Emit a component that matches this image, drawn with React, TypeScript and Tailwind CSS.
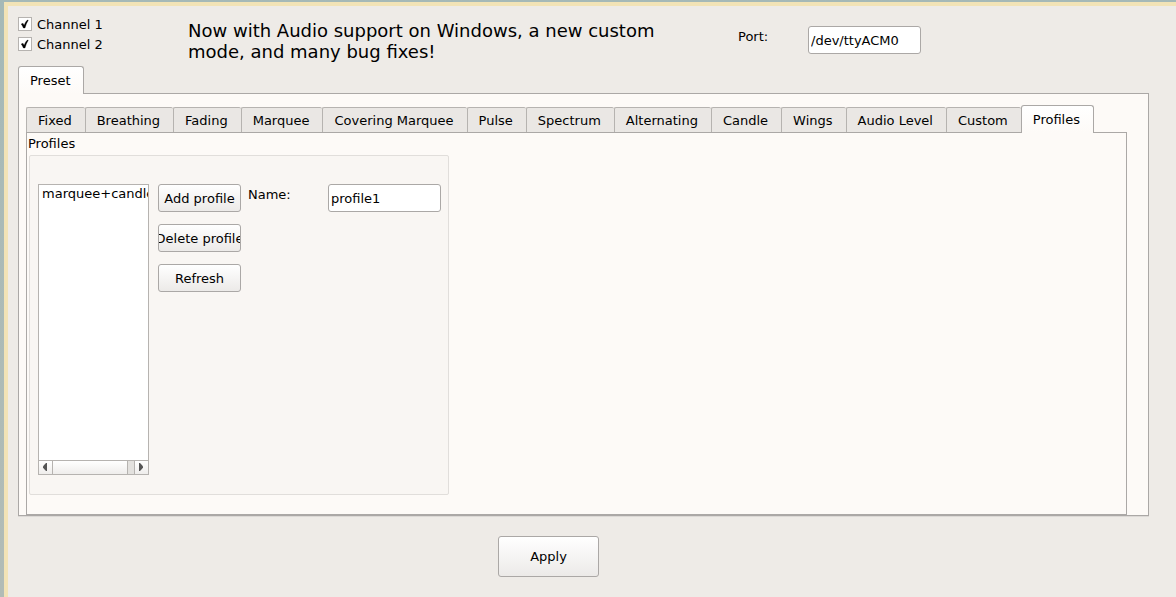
import { useState } from 'react';

const TABS = [
  'Fixed',
  'Breathing',
  'Fading',
  'Marquee',
  'Covering Marquee',
  'Pulse',
  'Spectrum',
  'Alternating',
  'Candle',
  'Wings',
  'Audio Level',
  'Custom',
  'Profiles',
];

const buttonLook =
  'overflow-hidden rounded-[3px] border border-[#aba8a6] bg-linear-to-b from-white to-[#eceae8] whitespace-nowrap';
const fieldLook =
  'h-7 w-[113px] rounded-[3px] border border-[#aba8a6] bg-white px-0.5 pt-px outline-none';

function ChannelCheck({ id, label }: { id: string; label: string }) {
  const [checked, setChecked] = useState(true);
  return (
    <div className="flex h-5 items-center gap-[5px]">
      <span className="grid size-3.5">
        <input
          id={id}
          type="checkbox"
          checked={checked}
          onChange={(e) => setChecked(e.target.checked)}
          className="col-start-1 row-start-1 size-3.5 appearance-none border border-[#b6b3b0] bg-white"
        />
        {checked && (
          <svg viewBox="0 0 14 14" className="pointer-events-none col-start-1 row-start-1 size-3.5">
            <path d="M3.2 7 L5 6.3 L6.1 8.2 Q7.4 4.6 9.4 3 L10.3 3.2 Q8.2 6.4 7 11 L5.4 11 Q4.6 8.8 3.2 7 Z" fill="#000" stroke="#000" strokeWidth="0.3" />
          </svg>
        )}
      </span>
      <label htmlFor={id} className="pt-px">{label}</label>
    </div>
  );
}

function ProfileList() {
  return (
    <div className="flex h-[291px] w-[111px] flex-col border border-[#b6b3b0] bg-white">
      <ul className="flex-1 overflow-hidden pl-[3px] whitespace-nowrap">
        <li>marquee+candle</li>
      </ul>
      <div className="flex h-3.5 border-t border-[#b6b3b0] bg-[#e3e1de]">
        <button aria-label="Scroll left" className="flex w-3.5 items-start border-r border-[#b6b3b0] bg-linear-to-b from-white to-[#efedeb] pt-0.5 pl-1">
          <svg viewBox="0 0 4 8" className="h-2 w-1">
            <path d="M4 0 V8 H3 L0 4.8 V3.2 L3 0 Z" fill="#555" />
          </svg>
        </button>
        <div className="flex-1 border-r border-[#b6b3b0] bg-linear-to-b from-white to-[#efedeb]" />
        <div className="w-1.5" />
        <button aria-label="Scroll right" className="flex w-3.5 items-start border-l border-[#b6b3b0] bg-linear-to-b from-white to-[#efedeb] pt-0.5 pl-1">
          <svg viewBox="0 0 4 8" className="h-2 w-1">
            <path d="M0 0 V8 H1 L4 4.8 V3.2 L1 0 Z" fill="#555" />
          </svg>
        </button>
      </div>
    </div>
  );
}

function ProfilesPanel() {
  return (
    <section aria-label="Profiles" className="pb-[19px]">
      <h2 className="h-[22px] pt-0.5 pl-px">Profiles</h2>
      <div className="ml-0.5 flex h-[340px] w-[420px] items-start rounded-[2px] border border-[#e1dedb] bg-[#f9f6f3] pt-7 pl-2">
        <ProfileList />
        <div className="ml-[9px] flex w-[83px] flex-col gap-3">
          {['Add profile', 'Delete profile', 'Refresh'].map((text) => (
            <button key={text} className={`${buttonLook} flex h-7 items-center justify-center pt-0.5`}>
              <span>{text}</span>
            </button>
          ))}
        </div>
        <label htmlFor="profile-name" className="ml-[7px] w-20 pt-0.5">
          Name:
        </label>
        <input id="profile-name" defaultValue="profile1" className={fieldLook} />
      </div>
    </section>
  );
}

export default function App() {
  const [active, setActive] = useState('Profiles');
  return (
    <div className="min-h-screen bg-linear-to-b from-[#a5b9b7] to-[#b2bcb6] pt-0.5 pl-1 font-['DejaVu_Sans',sans-serif] text-[13px] leading-[18px] text-black">
      <div className="min-h-[calc(100vh-2px)] border-t-4 border-l-4 border-[#f2e3b6] bg-[#eeebe7] pb-5 pl-2.5">
        <header className="flex h-[60px] items-start">
          <div className="w-[170px] pt-2">
            <ChannelCheck id="channel-1" label="Channel 1" />
            <ChannelCheck id="channel-2" label="Channel 2" />
          </div>
          <p className="w-[550px] pt-3.5 pr-16 text-[18px] leading-[21px]">
            Now with Audio support on Windows, a new custom mode, and many bug fixes!
          </p>
          <label htmlFor="port" className="w-[70px] pt-[22px]">
            Port:
          </label>
          <div className="pt-5">
            <input id="port" defaultValue="/dev/ttyACM0" className={fieldLook} />
          </div>
        </header>

        <main className="mr-[27px]">
          <div role="tablist" className="flex">
            <button
              role="tab"
              aria-selected="true"
              className="z-10 -mb-px h-7 rounded-t-[3px] border border-b-0 border-[#aba8a6] bg-linear-to-b from-white to-[#fdfaf7] pr-3 pl-[11px]"
            >
              Preset
            </button>
          </div>
          <div className="border border-[#aba8a6] bg-[#fdfaf7] pt-[11px] pr-[21px] pl-[7px] shadow-[0_1px_0_#dcd9d6]">
            <div role="tablist" className="flex items-end">
              {TABS.map((tab) => (
                <button
                  key={tab}
                  role="tab"
                  aria-selected={tab === active}
                  onClick={() => setActive(tab)}
                  className={
                    tab === active
                      ? 'z-10 -mb-px h-7 rounded-t-[3px] border border-b-0 border-[#aba8a6] bg-linear-to-b from-white to-[#fdfaf7] pr-[13px] pl-[11px] whitespace-nowrap'
                      : 'h-[25px] rounded-t-[2px] border-t border-l border-[#b6b3b0] bg-[#eae7e4] pt-px pr-[13px] pl-[11px] whitespace-nowrap'
                  }
                >
                  {tab}
                </button>
              ))}
            </div>
            <div className="border border-[#aba8a6]">
              <ProfilesPanel />
            </div>
          </div>
        </main>

        <footer className="mt-5 ml-[480px]">
          <button className={`${buttonLook} h-[41px] w-[101px]`}>Apply</button>
        </footer>
      </div>
    </div>
  );
}
